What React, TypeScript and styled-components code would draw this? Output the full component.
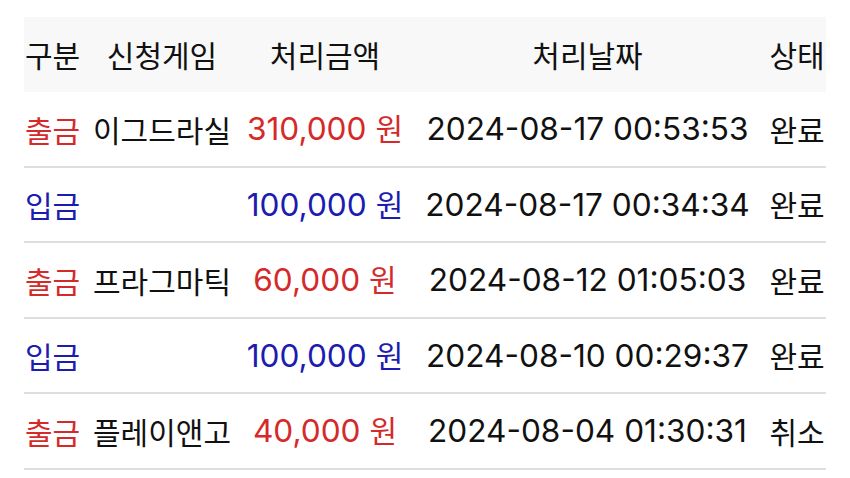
import { createGlobalStyle, styled } from "styled-components";

const GlobalStyle = createGlobalStyle`
    html, body {
        margin: 0;
        padding: 0;
        background: #ffffff;
    }
    body {
        font-family: "Noto Sans CJK KR", sans-serif;
        color: #111111;
    }
`;

const cols = "57px 162px 164px 361px 58px";

const Page = styled.div`
    padding: 17px 24px 0 24px;
`;

const Table = styled.div`
    width: 802px;
    display: flex;
    flex-direction: column;
`;

const HeaderRow = styled.div`
    display: grid;
    grid-template-columns: ${cols};
    height: 75px;
    align-items: center;
    background: #f8f8f8;
`;

const Row = styled.div`
    display: grid;
    grid-template-columns: ${cols};
    height: 73.5px;
    align-items: center;
    border-bottom: 2px solid #dedede;
`;

const Cell = styled.div<{ $tone?: "out" | "in" }>`
    text-align: center;
    white-space: nowrap;
    font-size: 30px;
    line-height: 1;
    color: ${p => p.$tone === "out" ? "#d42a2a" : p.$tone === "in" ? "#1c1cb0" : "#111111"};
`;

const HeadCell = styled(Cell)`
    padding-bottom: 2px;
`;

const Num = styled.span`
    font-family: "Inter", "Noto Sans CJK KR", sans-serif;
    font-size: 31.6px;
`;

const Won = styled.span`
    margin-left: 9px;
`;

interface Entry {
    kind: "출금" | "입금";
    game: string;
    amount: string;
    date: string;
    status: string;
}

const entries: Entry[] = [
    { kind: "출금", game: "이그드라실", amount: "310,000", date: "2024-08-17 00:53:53", status: "완료" },
    { kind: "입금", game: "", amount: "100,000", date: "2024-08-17 00:34:34", status: "완료" },
    { kind: "출금", game: "프라그마틱", amount: "60,000", date: "2024-08-12 01:05:03", status: "완료" },
    { kind: "입금", game: "", amount: "100,000", date: "2024-08-10 00:29:37", status: "완료" },
    { kind: "출금", game: "플레이앤고", amount: "40,000", date: "2024-08-04 01:30:31", status: "취소" },
];

export default function App() {
    return <>
        <GlobalStyle />
        <Page>
            <Table>
                <HeaderRow>
                    <HeadCell>구분</HeadCell>
                    <HeadCell>신청게임</HeadCell>
                    <HeadCell>처리금액</HeadCell>
                    <HeadCell>처리날짜</HeadCell>
                    <HeadCell>상태</HeadCell>
                </HeaderRow>
                {entries.map((e, i) => {
                    const tone = e.kind === "출금" ? "out" : "in";
                    return <Row key={i}>
                        <Cell $tone={tone}>{e.kind}</Cell>
                        <Cell>{e.game}</Cell>
                        <Cell $tone={tone}><Num>{e.amount}</Num><Won>원</Won></Cell>
                        <Cell><Num>{e.date}</Num></Cell>
                        <Cell>{e.status}</Cell>
                    </Row>;
                })}
            </Table>
        </Page>
    </>;
}
